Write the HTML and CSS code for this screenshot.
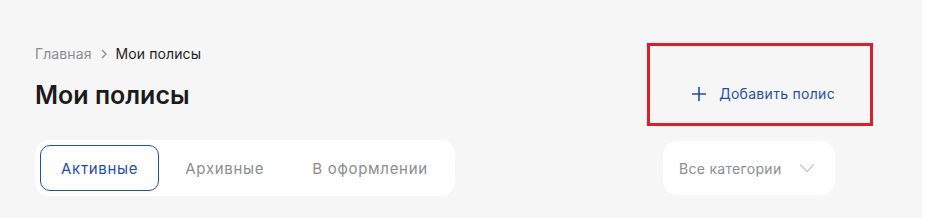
FILE: index.html
```html
<!DOCTYPE html>
<html lang="ru">
<head>
<meta charset="utf-8">
<title>Мои полисы</title>
<link rel="stylesheet" href="styles.css">
</head>
<body>
<div class="page">
  <div class="container">
    <div class="header">
      <div class="titles">
        <nav class="crumbs">
          <a class="crumb-link" href="#">Главная</a>
          <svg class="crumb-sep" width="8" height="10" viewBox="0 0 8 10"><path d="M2 1l4 4-4 4" fill="none" stroke="#8a8d93" stroke-width="1.3"/></svg>
          <span class="crumb-current">Мои полисы</span>
        </nav>
        <h1 class="title">Мои полисы</h1>
      </div>
      <div class="add-wrap">
        <button class="add-btn" type="button">
          <svg class="add-icon" width="16" height="16" viewBox="0 0 16 16"><path d="M8 1v14M1 8h14" stroke="#1d4fb0" stroke-width="1.6" fill="none"/></svg>
          <span>Добавить полис</span>
        </button>
        <div class="highlight"></div>
      </div>
    </div>
    <div class="filters">
      <div class="tabs">
        <button class="tab tab-active" type="button">Активные</button>
        <button class="tab" type="button">Архивные</button>
        <button class="tab tab-last" type="button">В оформлении</button>
      </div>
      <div class="select">
        <span>Все категории</span>
        <svg class="chev" width="16" height="10" viewBox="0 0 16 10"><path d="M1 1.5l7 7 7-7" fill="none" stroke="#c8c9cc" stroke-width="1.4"/></svg>
      </div>
    </div>
  </div>
</div>
</body>
</html>
```

FILE: styles.css
```css
html, body {
  margin: 0;
  padding: 0;
  background: #ffffff;
}
.page {
  width: 922px;
  height: 218px;
  background: #f6f6f6;
  font-family: "Inter", "DejaVu Sans", sans-serif;
  overflow: hidden;
}
.container {
  width: 800px;
  margin-left: 35px;
  padding-top: 45px;
}
.header {
  display: flex;
  justify-content: space-between;
  align-items: flex-start;
}
.crumbs {
  display: flex;
  align-items: center;
  gap: 8px;
  font-size: 14px;
  line-height: 18px;
  letter-spacing: 0.1px;
}
.crumb-link {
  color: #8a8d93;
  text-decoration: none;
}
.crumb-current {
  color: #1f1f1f;
}
.title {
  margin: 17px 0 0;
  font-size: 25px;
  line-height: 30px;
  font-weight: 600;
  color: #1a1a1a;
}
.add-wrap {
  position: relative;
  padding-top: 40px;
}
.add-btn {
  display: flex;
  align-items: center;
  gap: 12px;
  background: none;
  border: 0;
  padding: 0;
  font-family: inherit;
  font-size: 14px;
  line-height: 18px;
  letter-spacing: 0.3px;
  color: #1d4fb0;
  cursor: pointer;
}
.highlight {
  position: absolute;
  right: -38px;
  top: -2px;
  width: 220px;
  height: 77px;
  border: 3px solid #dc1f2a;
}
.filters {
  display: flex;
  justify-content: space-between;
  align-items: center;
  margin-top: 30px;
}
.tabs {
  display: flex;
  background: #ffffff;
  border-radius: 14px;
  padding: 5px;
}
.tab {
  height: 46px;
  padding: 0 24px;
  border: 1px solid transparent;
  border-radius: 10px;
  background: none;
  font-family: inherit;
  font-size: 15px;
  letter-spacing: 0.7px;
  color: #8a8d93;
  cursor: pointer;
}
.tab + .tab {
  margin-left: 1px;
}
.tab-active {
  padding: 0 20px;
  border-color: #1d4fb0;
  color: #1d4fb0;
}
.tab-last {
  padding-left: 21px;
  padding-right: 21px;
}
.select {
  width: 172px;
  height: 54px;
  box-sizing: border-box;
  background: #ffffff;
  border-radius: 14px;
  display: flex;
  align-items: center;
  gap: 18px;
  padding-left: 16px;
  font-size: 14px;
  letter-spacing: 0.3px;
  color: #8a8d93;
}
```
